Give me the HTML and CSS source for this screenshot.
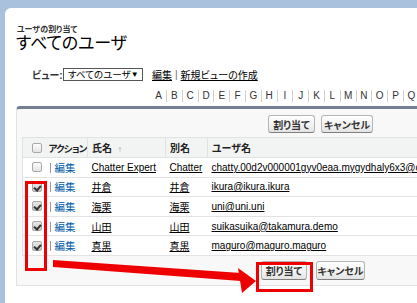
FILE: index.html
```html
<!DOCTYPE html>
<html lang="ja">
<head>
<meta charset="utf-8">
<link rel="stylesheet" href="styles.css">
</head>
<body>
<div class="panel">
  <div class="crumb">ユーザの割り当て</div>
  <h1 class="title">すべてのユーザ</h1>
  <div class="viewrow">
    <span class="viewlabel">ビュー:</span>
    <span class="select"><span class="seltext">すべてのユーザ</span><span class="caret">▼</span></span>
    <a class="plain">編集</a><span class="bar">|</span><a class="plain">新規ビューの作成</a>
  </div>
  <div class="alpha">
    <span>A</span><span>B</span><span>C</span><span>D</span><span>E</span><span>F</span><span>G</span><span>H</span><span>I</span><span>J</span><span>K</span><span>L</span><span>M</span><span>N</span><span>O</span><span>P</span><span>Q</span>
  </div>
  <div class="block">
    <div class="btnrow top">
      <span class="btn w1">割り当て</span>
      <span class="btn w2">キャンセル</span>
    </div>
    <table class="list">
      <tr class="head">
        <th class="c-chk"><span class="cb"></span></th>
        <th class="c-act"><span class="tight">アクション</span></th>
        <th class="c-name">氏名 <span class="sort">↑</span></th>
        <th class="c-alias">別名</th>
        <th class="c-user">ユーザ名</th>
      </tr>
      <tr>
        <td class="c-chk"><span class="cb"></span></td>
        <td class="c-act"><span class="pipe"></span><a class="edit">編集</a></td>
        <td class="c-name"><a class="u">Chatter Expert</a></td>
        <td class="c-alias"><a class="u">Chatter</a></td>
        <td class="c-user"><a class="u">chatty.00d2v000001gyv0eaa.mygydhaly6x3@chatter.salesforce.com</a></td>
      </tr>
      <tr>
        <td class="c-chk"><span class="cb on"></span></td>
        <td class="c-act"><span class="pipe"></span><a class="edit">編集</a></td>
        <td class="c-name"><a class="u">井倉</a></td>
        <td class="c-alias"><a class="u">井倉</a></td>
        <td class="c-user"><a class="u">ikura@ikura.ikura</a></td>
      </tr>
      <tr>
        <td class="c-chk"><span class="cb on"></span></td>
        <td class="c-act"><span class="pipe"></span><a class="edit">編集</a></td>
        <td class="c-name"><a class="u">海栗</a></td>
        <td class="c-alias"><a class="u">海栗</a></td>
        <td class="c-user"><a class="u">uni@uni.uni</a></td>
      </tr>
      <tr>
        <td class="c-chk"><span class="cb on"></span></td>
        <td class="c-act"><span class="pipe"></span><a class="edit">編集</a></td>
        <td class="c-name"><a class="u">山田</a></td>
        <td class="c-alias"><a class="u">山田</a></td>
        <td class="c-user"><a class="u">suikasuika@takamura.demo</a></td>
      </tr>
      <tr>
        <td class="c-chk"><span class="cb on"></span></td>
        <td class="c-act"><span class="pipe"></span><a class="edit">編集</a></td>
        <td class="c-name"><a class="u">真黒</a></td>
        <td class="c-alias"><a class="u">真黒</a></td>
        <td class="c-user"><a class="u">maguro@maguro.maguro</a></td>
      </tr>
    </table>
    <div class="btnrow bottom">
      <span class="btn w1b">割り当て</span>
      <span class="btn w2b">キャンセル</span>
    </div>
  </div>
</div>
<svg class="marks" width="417" height="303" viewBox="0 0 417 303">
  <rect x="26.5" y="182.5" width="19" height="87" fill="none" stroke="#ee0000" stroke-width="3"/>
  <rect x="257.5" y="263.5" width="54" height="27" fill="none" stroke="#ee0000" stroke-width="3"/>
  <polygon points="53,260 241,273 241,281 53,267" fill="#ee0000"/>
  <polygon points="238,268 256,281 242,293" fill="#ee0000"/>
</svg>
</body>
</html>
```
FILE: styles.css
```css
* { box-sizing: border-box; }
html, body { margin: 0; padding: 0; }
body {
  width: 417px;
  height: 303px;
  overflow: hidden;
  position: relative;
  background: #a9c1dd;
  font-family: "Liberation Sans", "Noto Sans CJK JP", sans-serif;
  font-feature-settings: "palt";
  color: #000;
  padding: 8px 0 0 5px;
}
.panel {
  background: #fff;
  height: 295px;
  border-top-left-radius: 6px;
  padding: 17px 0 0 11px;
  overflow: hidden;
}
.crumb {
  font-size: 8px;
  line-height: 9px;
  font-weight: bold;
  color: #333;
  padding-left: 1px;
}
.title {
  margin: 0;
  font-size: 17px;
  line-height: 20px;
  font-weight: normal;
  letter-spacing: -0.2px;
}
.viewrow {
  margin-top: 14px;
  padding-left: 16px;
  display: flex;
  align-items: center;
  height: 13px;
  font-size: 10px;
  white-space: nowrap;
}
.viewlabel { font-weight: bold; color: #333; width: 31px; }
.select {
  display: inline-flex;
  align-items: center;
  justify-content: space-between;
  width: 80px;
  height: 13px;
  border: 1px solid #555;
  padding: 0 4px 0 4px;
  margin-right: 9px;
  white-space: nowrap;
}
.seltext { font-size: 9.5px; line-height: 11px; }
.caret { font-size: 8px; line-height: 11px; }
.plain { color: #000; text-decoration: underline; }
.bar { color: #666; margin: 0 3px; }
.alpha {
  margin-top: 9px;
  padding-left: 135px;
  display: flex;
  height: 12px;
  font-size: 10px;
  line-height: 12px;
  color: #333;
  white-space: nowrap;
}
.alpha span {
  flex: none;
  width: 15.8px;
  text-align: center;
  border-left: 1px solid #cfcfcf;
}
.alpha span:first-child { border-left: none; width: 15px; }
.block {
  margin-top: 4px;
  width: 520px;
  border-top: 3px solid #747e94;
  border-left: 1px solid #e0e3e5;
  border-bottom: 1px solid #e0e3e5;
  border-top-left-radius: 4px;
  background: #f8f8f8;
  padding: 6px 0 5px 5px;
}
.btnrow { display: flex; height: 18px; }
.btnrow.top { padding-left: 246px; margin-bottom: 4px; }
.btnrow.bottom { padding-left: 239px; margin-top: 5px; height: 19px; }
.btn {
  display: inline-flex;
  align-items: center;
  justify-content: center;
  height: 100%;
  border: 1px solid #b5b5b5;
  border-bottom-color: #7f7f7f;
  border-radius: 3px;
  background: linear-gradient(#ffffff, #f4f4f4 50%, #e3e3e3);
  font-size: 10px;
  font-weight: bold;
  color: #333;
}
.w1 { width: 47px; margin-right: 6px; }
.w2 { width: 52px; }
.w1b { width: 46px; margin-right: 9px; }
.w2b { width: 49px; }
.list {
  border-collapse: collapse;
  background: #fff;
  border: 1px solid #e0e3e5;
  border-right: none;
  font-size: 10px;
  table-layout: fixed;
  width: 520px;
}
.list th, .list td {
  padding: 0;
  height: 19.6px;
  text-align: left;
  white-space: nowrap;
  overflow: hidden;
  border-bottom: 1px solid #e3e3e3;
  vertical-align: middle;
}
.list tr.head th {
  height: 20px;
  background: #f2f3f3;
  font-weight: bold;
  color: #222;
  border-bottom: 1px solid #e0e3e5;
}
.head .c-act, .head .c-name, .head .c-alias { border-right: 1px solid #e0e3e5; }
.tight { font-size: 9.5px; letter-spacing: -0.8px; }
.c-chk { width: 23px; padding-left: 9px !important; }
.c-act { width: 42px; padding-left: 3px !important; }
.c-name { width: 78px; padding-left: 4px !important; }
.c-alias { width: 42px; padding-left: 4px !important; }
.c-user { width: 335px; padding-left: 4px !important; }
.sort { color: #999; font-size: 8px; margin-left: 3px; }
.cb {
  display: block;
  width: 10px;
  height: 10px;
  border: 1px solid #a9a9a9;
  border-radius: 2px;
  background: linear-gradient(#fdfdfd, #e4e4e4);
}
.cb.on {
  background: linear-gradient(#e8e8e8, #c9c9c9);
  position: relative;
}
.cb.on::after {
  content: "";
  position: absolute;
  left: 2px;
  top: 1px;
  width: 3px;
  height: 5px;
  border-right: 2px solid #333;
  border-bottom: 2px solid #333;
  transform: rotate(40deg);
}
.pipe {
  display: inline-block;
  width: 1px;
  height: 10px;
  background: #999;
  vertical-align: -1px;
  margin: 0 4px 0 1px;
}
.edit { color: #015ba7; font-size: 10.5px; }
.u { color: #000; text-decoration: underline; }
.marks { position: absolute; left: 0; top: 0; pointer-events: none; }
```
